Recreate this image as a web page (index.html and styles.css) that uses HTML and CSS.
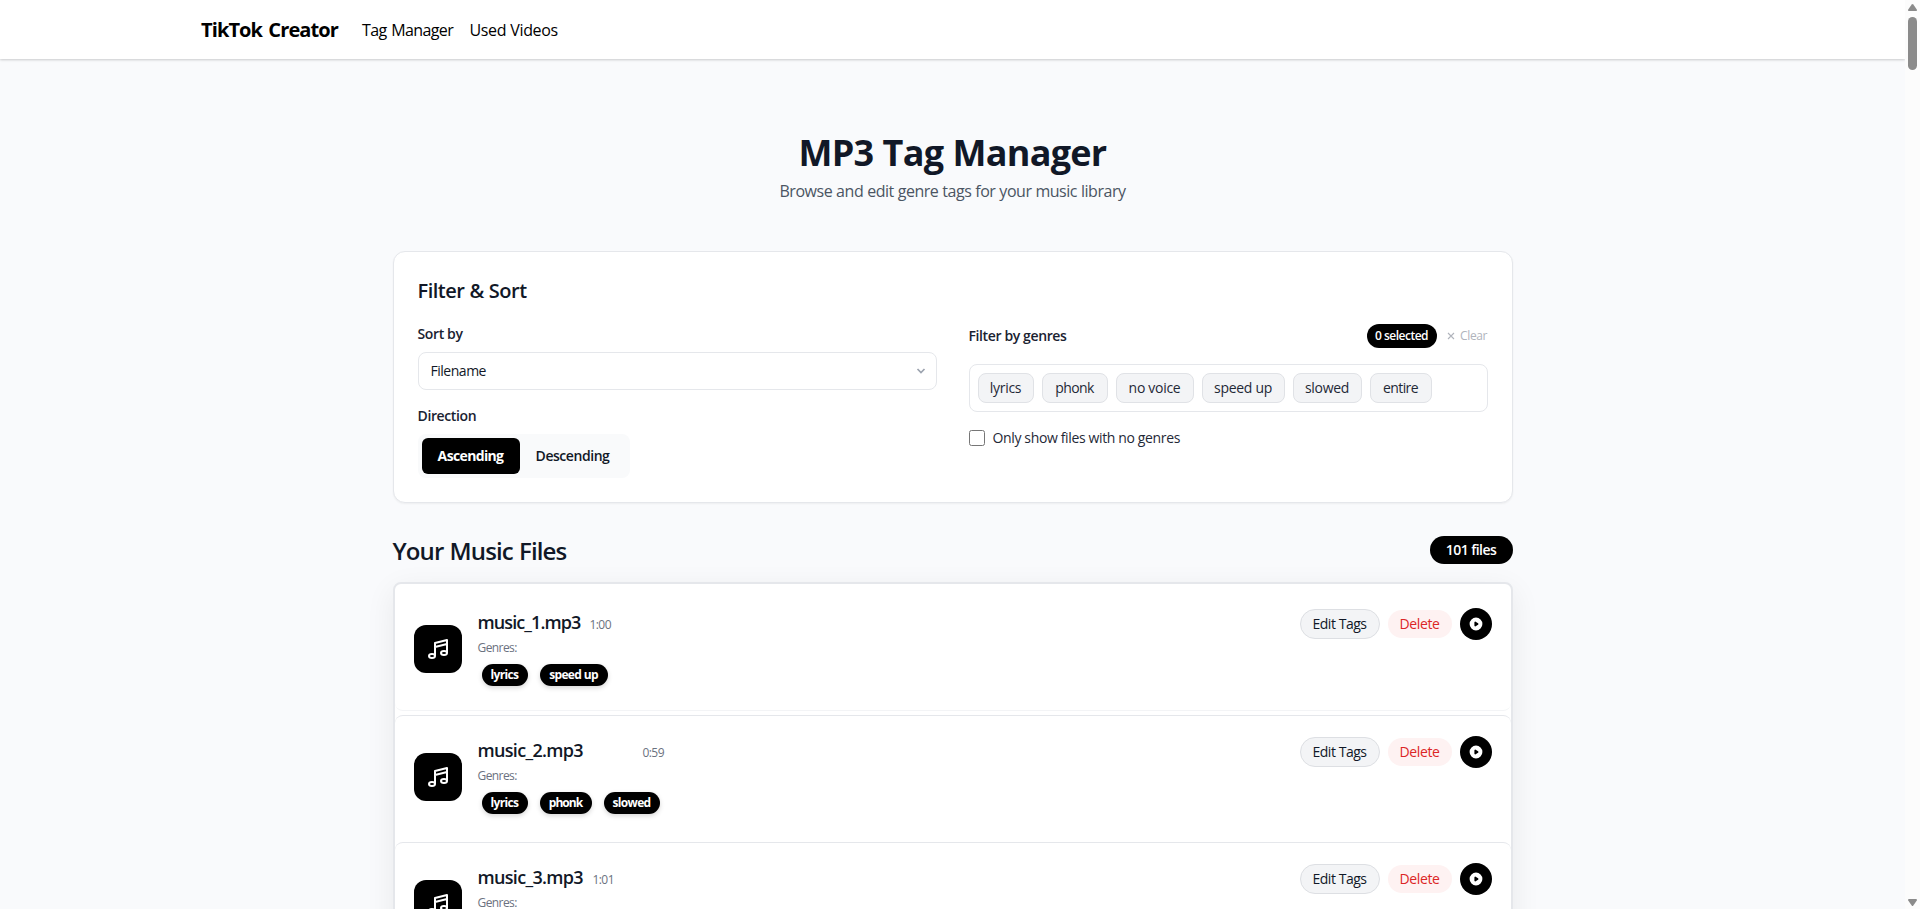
FILE: index.html
```html
<!DOCTYPE html>
<html lang="en">
<head>
<meta charset="utf-8">
<title>MP3 Tag Manager</title>
<link rel="stylesheet" href="styles.css">
</head>
<body>
<svg class="defs" width="0" height="0">
  <symbol id="note" viewBox="0 0 24 24"><path d="M9 19V6l12-3v13M9 19c0 1.105-1.343 2-3 2s-3-.895-3-2 1.343-2 3-2 3 .895 3 2zm12-3c0 1.105-1.343 2-3 2s-3-.895-3-2 1.343-2 3-2 3 .895 3 2zM9 10l12-3" /></symbol>
  <symbol id="play" viewBox="0 0 20 20"><path fill-rule="evenodd" d="M10 18a8 8 0 100-16 8 8 0 000 16zM9.555 7.168A1 1 0 008 8v4a1 1 0 001.555.832l3-2a1 1 0 000-1.664l-3-2z" /></symbol>
</svg>
<div class="page">
  <header class="navbar">
    <a class="brand">TikTok Creator</a>
    <nav class="links"><a class="link-tag">Tag Manager</a><a class="link-used">Used Videos</a></nav>
  </header>
  <main class="content">
    <h1 class="title">MP3 Tag Manager</h1>
    <p class="subtitle">Browse and edit genre tags for your music library</p>

    <section class="card">
      <h2 class="card-title">Filter &amp; Sort</h2>
      <div class="columns">
        <div class="column">
          <div class="label">Sort by</div>
          <div class="select"><span>Filename</span><svg width="10" height="10" viewBox="0 0 10 10"><path d="M1.500 3 5 6.500l3.500-3.500" /></svg></div>
          <div class="label">Direction</div>
          <div class="toggle"><button class="asc">Ascending</button><button class="desc">Descending</button></div>
        </div>
        <div class="column">
          <div class="genre-head">
            <span class="label">Filter by genres</span>
            <span class="selected">0 selected</span>
            <span class="clear"><svg width="8" height="8" viewBox="0 0 8 8"><path d="M1 1l6 6M7 1 1 7" /></svg>Clear</span>
          </div>
          <div class="genre-box">
            <span class="genre w56">lyrics</span><span class="genre w66 tight">phonk</span><span class="genre w78">no voice</span><span class="genre w83">speed up</span><span class="genre w69">slowed</span><span class="genre w62 tight">entire</span>
          </div>
          <label class="check"><span class="box"></span>Only show files with no genres</label>
        </div>
      </div>
    </section>

    <div class="list-head"><h2 class="list-title">Your Music Files</h2><span class="count">101 files</span></div>

    <div class="list">
      <article class="row first">
        <div class="cover"><svg width="24" height="24"><use href="#note" /></svg></div>
        <div class="info">
          <div class="name-line"><span class="name narrow">music_1.mp3</span><span class="time">1:00</span></div>
          <div class="genres-label">Genres:</div>
          <div class="tags"><span class="tag w46">lyrics</span><span class="tag w68">speed up</span></div>
        </div>
        <div class="actions"><button class="edit">Edit Tags</button><button class="delete">Delete</button><button class="play"><svg width="16" height="16"><use href="#play" /></svg></button></div>
      </article>
      <article class="row">
        <div class="cover"><svg width="24" height="24"><use href="#note" /></svg></div>
        <div class="info">
          <div class="name-line"><span class="name">music_2.mp3</span><span class="time far">0:59</span></div>
          <div class="genres-label">Genres:</div>
          <div class="tags"><span class="tag w46">lyrics</span><span class="tag w52">phonk</span><span class="tag w56s">slowed</span></div>
        </div>
        <div class="actions"><button class="edit">Edit Tags</button><button class="delete">Delete</button><button class="play"><svg width="16" height="16"><use href="#play" /></svg></button></div>
      </article>
      <article class="row">
        <div class="cover"><svg width="24" height="24"><use href="#note" /></svg></div>
        <div class="info">
          <div class="name-line"><span class="name">music_3.mp3</span><span class="time">1:01</span></div>
          <div class="genres-label">Genres:</div>
        </div>
        <div class="actions"><button class="edit">Edit Tags</button><button class="delete">Delete</button><button class="play"><svg width="16" height="16"><use href="#play" /></svg></button></div>
      </article>
    </div>
  </main>
</div>
<aside class="scrollbar">
  <svg width="9" height="7" viewBox="0 0 9 7"><path d="M3.700.6Q4.500-.4 5.300.6L8.800 5.400Q9.300 7 8 7H1Q-.3 7 .2 5.400z" /></svg>
  <div class="thumb"></div>
  <svg class="down" width="9" height="7" viewBox="0 0 9 7"><path d="M3.700 6.400Q4.500 7.400 5.300 6.400L8.800 1.600Q9.300 0 8 0H1Q-.3 0 .2 1.600z" /></svg>
</aside>
</body>
</html>
```
FILE: styles.css
```css
* { box-sizing: border-box; }
body {
  margin: 0;
  height: 909px;
  overflow: hidden;
  display: flex;
  background: #f9fafc;
  color: #111827;
  font: 400 14px/20px "Open Sans", "Noto Sans", sans-serif;
}
h1, h2, p { margin: 0; }
button { border: 0; padding: 0; font: inherit; color: inherit; }
span, a, button { white-space: nowrap; }
.defs { position: absolute; }
.page { width: 1905px; height: 909px; overflow: hidden; }

.navbar {
  height: 59px;
  padding-left: 201px;
  display: flex;
  align-items: center;
  background: #fff;
  color: #000;
  box-shadow: 0 1px 3px rgba(0, 0, 0, .1), 0 1px 2px rgba(0, 0, 0, .1);
}
.brand { width: 161px; font-size: 20px; font-weight: 700; letter-spacing: -.9px; word-spacing: 2px; }
.links { display: flex; font-size: 16px; }
.link-tag { width: 107.500px; letter-spacing: -.6px; word-spacing: 1px; }
.link-used { letter-spacing: -.38px; word-spacing: .5px; }

.content { width: 1120px; margin: 0 auto; padding-top: 74px; }
.title { font-size: 36px; line-height: 40px; font-weight: 700; letter-spacing: -.72px; word-spacing: .5px; text-align: center; }
.subtitle { margin-top: 6px; font-size: 16px; line-height: 24px; color: #4b5563; letter-spacing: -.47px; word-spacing: .25px; text-align: center; }

.card {
  margin-top: 48px;
  height: 252px;
  padding: 25px 24px 23px;
  border: 1px solid #e5e7eb;
  border-radius: 12px;
  background: #fff;
  box-shadow: 0 1px 2px rgba(0, 0, 0, .05);
}
.card-title { font-size: 20px; line-height: 28px; font-weight: 600; letter-spacing: -.52px; word-spacing: .5px; }
.columns { margin-top: 19px; display: grid; grid-template-columns: 1fr 1fr; gap: 32px; }
.column { display: flex; flex-direction: column; align-items: stretch; }
.label { color: #1a2231; font-weight: 600; letter-spacing: -.38px; }
.select {
  height: 38px;
  margin: 8px 0 16px;
  padding: 0 10px 0 12px;
  display: flex;
  align-items: center;
  justify-content: space-between;
  border: 1px solid #e5e7eb;
  border-radius: 8px;
  letter-spacing: -.48px;
}
.select path { fill: none; stroke: #9ca3af; stroke-width: 1.7; }
.toggle {
  align-self: flex-start;
  width: 212px;
  height: 44px;
  margin-top: 8px;
  padding: 4px;
  display: flex;
  border-radius: 8px;
  background: #f9fafb;
}
.asc { width: 98px; border-radius: 6px; background: #000; color: #fff; font-weight: 700; letter-spacing: -.64px; }
.desc { flex: 1; background: none; font-weight: 600; letter-spacing: -.45px; }

.genre-head { height: 24px; display: flex; align-items: center; }
.selected {
  width: 70px;
  margin-left: auto;
  border-radius: 12px;
  background: #000;
  color: #fff;
  font-size: 12px;
  line-height: 24px;
  font-weight: 600;
  letter-spacing: -.5px;
  text-align: center;
}
.clear { width: 51px; padding-left: 10px; display: flex; align-items: center; gap: 5.500px; color: #b0b4bc; font-size: 12px; letter-spacing: -.35px; }
.clear path { stroke: #b0b4bc; stroke-width: 1.1; }
.genre-box { height: 48px; margin-top: 16px; padding: 8px; display: flex; gap: 8px; border: 1px solid #e5e7eb; border-radius: 8px; }
.genre { height: 30px; border: 1px solid #e0e2e6; border-radius: 8px; background: #f3f4f6; line-height: 28px; text-align: center; color: #1f2937; letter-spacing: -.3px; }
.tight { letter-spacing: -.6px; }
.w56 { width: 56px; }
.w66 { width: 66px; }
.w78 { width: 78px; }
.w83 { width: 83px; }
.w69 { width: 69px; }
.w62 { width: 62px; }
.check { margin-top: 16px; display: flex; align-items: center; gap: 8px; color: #1f2937; letter-spacing: -.36px; }
.box { width: 16px; height: 16px; border: 1px solid #767676; border-radius: 2.500px; background: #fff; }

.list-head { height: 32px; margin-top: 31px; display: flex; align-items: center; justify-content: space-between; }
.list-title { padding-top: 2px; font-size: 24px; line-height: 32px; font-weight: 600; letter-spacing: -.88px; word-spacing: .8px; }
.count { width: 83px; height: 28px; border-radius: 14px; background: #000; color: #fff; font-weight: 600; line-height: 28px; text-align: center; letter-spacing: -.55px; }

.list { height: 500px; margin-top: 16px; border: 2px solid #e5e7eb; border-radius: 8px; background: #fff; box-shadow: 0 8px 30px rgba(0, 0, 0, .07); }
.row { height: 127px; padding: 20px 19px 0; display: flex; border-top: 1px solid #e5e7eb; border-radius: 8px; }
.row.first { margin-bottom: 4px; padding-top: 24px; border-top: 0; border-bottom: 1px solid #f3f4f6; }
.cover { width: 48px; height: 48px; margin-top: 17px; display: grid; place-items: center; border-radius: 12px; background: #000; }
.cover svg { fill: none; stroke: #fff; stroke-width: 2; stroke-linecap: round; stroke-linejoin: round; }
.info { margin-left: 16px; flex: 1; }
.name-line { display: flex; height: 28px; line-height: 28px; align-items: baseline; }
.name { width: 115px; font-size: 18px; font-weight: 600; letter-spacing: -.68px; }
.narrow { width: 112px; letter-spacing: -.9px; }
.time, .genres-label { font-size: 12px; color: #6b7280; letter-spacing: -.58px; }
.far { margin-left: 50px; }
.genres-label { line-height: 16px; margin-top: 4px; }
.tags { display: flex; gap: 12px; padding: 8px 0 0 4px; }
.tag { height: 22px; border-radius: 11px; background: #000; color: #fff; font-size: 12px; line-height: 22px; font-weight: 700; letter-spacing: -.65px; text-align: center; box-shadow: 0 2px 5px rgba(0, 0, 0, .16); }
.w46 { width: 46px; }
.w68 { width: 68px; }
.w52 { width: 52px; letter-spacing: -.95px; }
.w56s { width: 56px; }
.actions { height: 32px; display: flex; align-items: center; gap: 8px; }
.edit { width: 80px; height: 30px; border: 1px solid #dddfe3; border-radius: 15px; background: #f3f4f6; letter-spacing: -.45px; }
.delete { width: 64px; height: 28px; border-radius: 14px; background: #fef2f2; color: #dc2626; letter-spacing: -.35px; }
.play { width: 32px; height: 32px; display: grid; place-items: center; border-radius: 50%; background: #000; }
.play svg { fill: #fff; }

.scrollbar { width: 15px; padding: 4px 0 3px 3px; display: flex; flex-direction: column; background: #fcfcfc; }
.scrollbar path { fill: #8b8b8b; }
.thumb { width: 9px; height: 53px; margin-top: 6px; border-radius: 5px; background: #8b8b8b; }
.down { margin-top: auto; }
```
